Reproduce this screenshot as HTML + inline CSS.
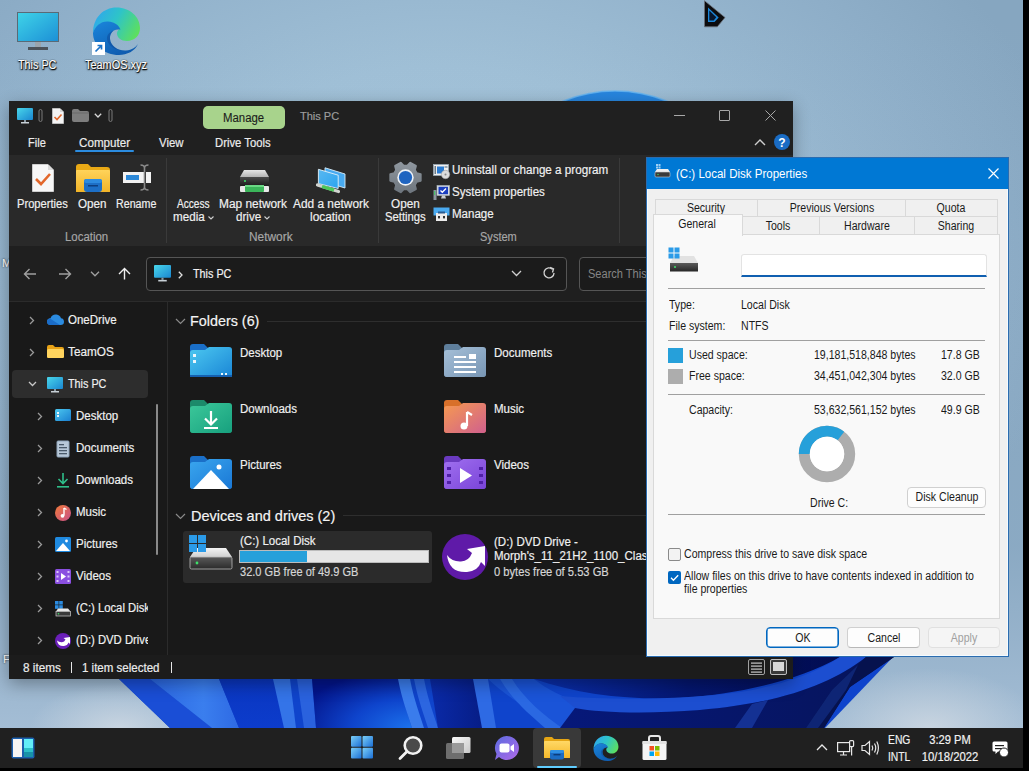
<!DOCTYPE html>
<html><head><meta charset="utf-8">
<style>
*{box-sizing:border-box;margin:0;padding:0}
html,body{width:1029px;height:771px;overflow:hidden}
body{position:relative;font-family:"Liberation Sans",sans-serif;font-size:12px;background:#000}
.a{position:absolute}
.t{position:absolute;white-space:nowrap;line-height:1}
#wall{left:0;top:0;width:1023px;height:728px;background:radial-gradient(ellipse 640px 460px at 440px 250px,#a7c6dc 0%,#9fbfd6 40%,#8eaec8 80%,#86a6c0 100%);overflow:hidden}
#exp{left:9px;top:101px;width:784px;height:578px;background:#1c1c1c;box-shadow:0 5px 16px rgba(0,0,0,.32)}
#dlg{left:646px;top:157px;width:363px;height:500px;background:#f0f0f0;border:1px solid #2b7bd0}
#task{left:0;top:728px;width:1023px;height:40px;background:#202020}
.w{color:#fff}
.g{color:#e8e8e8}
svg{position:absolute;overflow:visible}
.t{-webkit-text-stroke:0.18px currentColor}
.t.nd{-webkit-text-stroke:0}
</style></head><body>
<div id="wall" class="a">
<!-- BLOOM -->
<svg class="a" style="left:0;top:0" width="1023" height="728" viewBox="0 0 1023 728">
  <defs>
    <radialGradient id="dome" cx="0.5" cy="1" r="0.9">
      <stop offset="0" stop-color="#1a6cd8"/><stop offset="1" stop-color="#3d9cea"/>
    </radialGradient>
    <radialGradient id="lglow"><stop offset="0" stop-color="#d4dce4" stop-opacity="0.75"/><stop offset="1" stop-color="#d4dce4" stop-opacity="0"/></radialGradient>
    <linearGradient id="wallv" x1="0" y1="0" x2="0" y2="1"><stop offset="0" stop-color="#b4c8de" stop-opacity="0"/><stop offset="0.75" stop-color="#b4c8de" stop-opacity="0.1"/><stop offset="1" stop-color="#bcd0e6" stop-opacity="0.55"/></linearGradient>
    <linearGradient id="b2" x1="0" y1="0" x2="1" y2="0"><stop offset="0" stop-color="#2a66e2"/><stop offset="0.6" stop-color="#3a7eee"/><stop offset="1" stop-color="#2e6ae4"/></linearGradient>
    <linearGradient id="b3" x1="0" y1="0" x2="0" y2="1"><stop offset="0" stop-color="#0a36c0"/><stop offset="1" stop-color="#0c3ccc"/></linearGradient>
    <radialGradient id="deep" cx="1" cy="1" r="1.2"><stop offset="0" stop-color="#1c72ec"/><stop offset="0.5" stop-color="#0e44cc"/><stop offset="1" stop-color="#03148a"/></radialGradient>
    <linearGradient id="navy" x1="0" y1="0" x2="1" y2="0"><stop offset="0" stop-color="#0a2aa8"/><stop offset="1" stop-color="#061c84"/></linearGradient>
    <linearGradient id="topnavy" x1="0" y1="0" x2="1" y2="0"><stop offset="0" stop-color="#0a2fae"/><stop offset="0.5" stop-color="#041670"/><stop offset="1" stop-color="#020c50"/></linearGradient>
    <linearGradient id="botnavy" x1="0" y1="0" x2="1" y2="0"><stop offset="0" stop-color="#06187a"/><stop offset="1" stop-color="#06145a"/></linearGradient>
  </defs>
  <circle cx="615" cy="229" r="138" fill="#2584de" stroke="#62b4f2" stroke-width="1.5" stroke-opacity="0.8"/>
  <rect x="0" y="0" width="1023" height="728" fill="url(#wallv)"/>
  <ellipse cx="120" cy="728" rx="90" ry="45" fill="url(#lglow)"/>
  <ellipse cx="930" cy="728" rx="110" ry="60" fill="url(#lglow)"/>
  <!-- base bloom -->
  <path d="M119 679 L170 728 L825 728 L893 657 L893 640 L119 640 Z" fill="#0f44cc"/>
  <path d="M119 679 L150 679 L212 728 L170 728 Z" fill="#1a4ed6"/>
  <path d="M150 679 L219 679 L239 728 L212 728 Z" fill="url(#b2)"/>
  <path d="M219 679 L273 679 L290 728 L239 728 Z" fill="url(#b3)"/>
  <path d="M273 679 L290 679 L296 728 L284 728 Z" fill="#3474e8"/>
  <path d="M297 679 L312 679 L316 728 L304 728 Z" fill="#2a62de"/>
  <path d="M312 679 L400 679 C402 700 408 715 412 728 L316 728 Z" fill="url(#deep)"/>
  <path d="M398 679 L410 679 C414 700 420 715 424 728 L412 728 C408 715 402 700 398 679 Z" fill="#3a7cec"/>
  <path d="M414 679 L424 679 C428 700 434 715 438 728 L428 728 C424 715 418 700 414 679 Z" fill="#2c66e0"/>
  <path d="M430 679 L475 679 L486 728 L438 728 Z" fill="url(#navy)"/>
  <path d="M473 679 L488 679 L496 728 L482 728 Z" fill="#2e6ae4"/>
  <path d="M488 679 L534 679 C560 700 600 712 660 712 L700 710 L700 728 L560 728 C530 712 505 695 488 679 Z" fill="#1a54d8"/>
  <path d="M500 679 L512 679 C525 700 545 716 562 728 L545 728 C530 715 512 700 500 679 Z" fill="#2a68e2"/>
  <path d="M534 679 L793 679 L793 657 L840 657 C800 680 740 694 680 698 C630 700 580 695 534 679 Z" fill="url(#topnavy)"/>
  <path d="M560 696 C620 701 690 699 740 692 C790 684 820 670 840 657 L866 657 C830 685 780 703 700 710 C650 714 600 713 575 708 Z" fill="#1c4ed0"/>
  <path d="M560 728 L575 708 C600 713 650 714 700 710 C780 703 830 685 866 657 L894 657 L850 687 L824 728 Z" fill="url(#botnavy)"/>
  <path d="M735 728 L752 704 L768 700 L752 728 Z" fill="#1e44b0" opacity="0.6"/>
  <path d="M866 657 L894 657 L850 687 L824 728 L806 728 L832 690 Z" fill="#06124e"/>
  <path d="M832 690 L858 665 L846 690 L818 728 L806 728 Z" fill="#102a80" opacity="0.8"/>
</svg>
</div>

<!-- desktop icons -->
<svg style="left:17px;top:12px" width="42" height="38" viewBox="0 0 42 38">
  <defs><linearGradient id="mon" x1="0" y1="0" x2="1" y2="1"><stop offset="0" stop-color="#3fd4e8"/><stop offset="1" stop-color="#1c8fd6"/></linearGradient></defs>
  <rect x="0.5" y="0.5" width="41" height="29" fill="url(#mon)" stroke="#5a6a76" stroke-width="1"/>
  <rect x="18" y="30" width="6" height="5" fill="#9aa4ac"/>
  <rect x="11" y="35" width="20" height="3" fill="#4b5259"/>
</svg>
<div class="t" style="left:18px;top:59px;font-size:12px;transform:scaleX(.9);transform-origin:0 0;color:#fff;text-shadow:0 0 1px #000,1px 1px 1px #000,0 1px 2px #000">This PC</div>
<svg style="left:92px;top:6px" width="49" height="49" viewBox="0 0 49 49"><defs>
<linearGradient id="eaD" x1="0" y1="0.3" x2="1" y2="0.7"><stop offset="0" stop-color="#2fa8ec"/><stop offset="0.45" stop-color="#2ec4c8"/><stop offset="1" stop-color="#5fe05a"/></linearGradient>
<linearGradient id="ebD" x1="0" y1="0" x2="0.6" y2="1"><stop offset="0" stop-color="#1a86dc"/><stop offset="1" stop-color="#0f5cb0"/></linearGradient>
</defs>
<path d="M1 27 C1 12 11 1.5 24.5 1.5 C38 1.5 48 11 48 22 C48 30 42 35 35 35 C29 35 25 31.5 25 27.5 C25 25.5 26 24 27.5 23 C25 18 20 15.5 15 16 C8 16.5 3 21 1 27 Z" fill="url(#eaD)"/>
<path d="M1 27 C3 20 9 15 16 15.5 C22 16 27 19 28.5 23.5 C22 22.5 17.5 27 18 33 C18.5 40 26 45 34 44.5 C40 44 44 41 46 38 C43 45 35 49 27 49 C12 49 1 39 1 27 Z" fill="url(#ebD)"/>
<path d="M18 33 C17.5 27 22 22.5 28.5 23.5 C21 23 14.5 27 15 33 C15.5 40 24 45 34 44.5 C26 45 18.5 40 18 33 Z" fill="#0c4a9a" opacity="0.55"/><rect x="0" y="36" width="13" height="13" fill="#fff"/><path d="M3.5 45.5 L9.5 39.5 M5.5 39.5 H9.5 V43.5" stroke="#1a72c8" stroke-width="1.7" fill="none"/></svg>
<div class="t" style="left:85px;top:59px;font-size:12px;transform:scaleX(.91);transform-origin:0 0;color:#fff;text-shadow:0 0 1px #000,1px 1px 1px #000,0 1px 2px #000">TeamOS.xyz</div>
<div class="t" style="left:2px;top:258px;font-size:11px;color:#fff;text-shadow:0 0 2px #000">M</div>
<div class="t" style="left:3px;top:654px;font-size:11px;color:#fff;text-shadow:0 0 2px #000">F</div>
<!-- cursor-like glyph -->
<svg style="left:703px;top:0px" width="24" height="28" viewBox="0 0 24 28">
  <path d="M1.5 0.7 L22 17.5 L14.3 26.8 L1.5 26.8 Z" fill="#0c0c0e" stroke="#6a7078" stroke-width="0.8"/>
  <path d="M5 7.5 L15.7 17.5 L11.5 22 L5 22 Z" fill="#1c86d8"/>
  <path d="M6.3 10.5 L13.3 17.3 L10.7 20.6 L6.3 20.6 Z" fill="#06162e"/>
</svg>

<!-- EXPLORER -->
<div id="exp" class="a"></div>
<div class="a" style="left:9px;top:101px;width:784px;height:54px;background:#202020;"></div>
<div class="a" style="left:9px;top:155px;width:784px;height:91px;background:#292929;"></div>
<div class="a" style="left:9px;top:246px;width:784px;height:55px;background:#1f1f1f;"></div>
<div class="a" style="left:9px;top:301px;width:784px;height:1px;background:#2b2b2b;"></div>
<div class="a" style="left:9px;top:302px;width:784px;height:353px;background:#191919;"></div>
<div class="a" style="left:9px;top:655px;width:784px;height:24px;background:#1c1c1c;"></div>
<div class="a" style="left:167px;top:302px;width:1px;height:353px;background:#2b2b2b;"></div>
<svg style="left:17px;top:108px;" width="16" height="16" viewBox="0 0 16 16"><defs><linearGradient id="monS" x1="0" y1="0" x2="1" y2="1"><stop offset="0" stop-color="#49d6ea"/><stop offset="1" stop-color="#1a86d0"/></linearGradient></defs><rect x="0" y="0" width="16" height="12" rx="1" fill="url(#monS)"/><rect x="7" y="12" width="2" height="2" fill="#8a9aa6"/><rect x="4" y="14" width="8" height="1.5" fill="#c8d0d6"/></svg>
<svg style="left:38px;top:109px;" width="5" height="13" viewBox="0 0 5 13"><rect x="1" y="0.5" width="3" height="12" rx="1.5" fill="none" stroke="#7a7a7a" stroke-width="1"/></svg>
<svg style="left:52px;top:108px;" width="12" height="16" viewBox="0 0 12 16"><path d="M0.5 0.5 H8 L11.5 4 V15.5 H0.5 Z" fill="#f4f4f4" stroke="#bdbdbd" stroke-width="1"/><path d="M8 0.5 V4 H11.5" fill="#d6d6d6"/><path d="M2.5 9 L5 11.5 L9.5 6.5" stroke="#e2672b" stroke-width="1.6" fill="none"/></svg>
<svg style="left:72px;top:109px;" width="17" height="13" viewBox="0 0 17 13"><path d="M0 2 Q0 0 2 0 H6 L8 2 H15 Q17 2 17 4 V11 Q17 13 15 13 H2 Q0 13 0 11 Z" fill="#7e7e7e"/><path d="M0 4 H17" stroke="#6a6a6a" stroke-width="1"/></svg>
<svg style="left:94px;top:113px;" width="8" height="5" viewBox="0 0 8 5"><path d="M0.8 0.8 L4 4 L7.2 0.8" stroke="#d8d8d8" stroke-width="1.3" fill="none"/></svg>
<svg style="left:108px;top:109px;" width="5" height="13" viewBox="0 0 5 13"><rect x="1" y="0.5" width="3" height="12" rx="1.5" fill="none" stroke="#7a7a7a" stroke-width="1"/></svg>
<div class="a" style="left:203px;top:106px;width:82px;height:23px;background:#a8d38c;border-radius:5px;"></div>
<div class="t" style="left:223px;top:112.44px;font-size:12px;color:#1b1b1b;transform:scaleX(0.95);transform-origin:0 0;-webkit-text-stroke:0.1px #1b1b1b;">Manage</div>
<div class="t" style="left:300px;top:110.99px;font-size:11px;color:#9d9d9d;">This PC</div>
<div class="a" style="left:674px;top:115px;width:11px;height:1px;background:#a8a8a8;"></div>
<div class="a" style="left:719px;top:110px;width:11px;height:11px;background:transparent;border:1px solid #a8a8a8;border-radius:1px;"></div>
<svg style="left:765px;top:110px;" width="11" height="11" viewBox="0 0 11 11"><path d="M0.5 0.5 L10.5 10.5 M10.5 0.5 L0.5 10.5" stroke="#a8a8a8" stroke-width="1"/></svg>
<div class="t" style="left:28px;top:136.84px;font-size:12px;color:#ececec;transform:scaleX(0.92);transform-origin:0 0;">File</div>
<div class="t" style="left:79px;top:136.84px;font-size:12px;color:#ececec;transform:scaleX(0.97);transform-origin:0 0;">Computer</div>
<div class="t" style="left:159px;top:136.84px;font-size:12px;color:#ececec;transform:scaleX(0.95);transform-origin:0 0;">View</div>
<div class="t" style="left:215px;top:136.84px;font-size:12px;color:#ececec;transform:scaleX(0.94);transform-origin:0 0;">Drive Tools</div>
<div class="a" style="left:75px;top:150px;width:59px;height:2px;background:#2b8ce0;border-radius:1px;"></div>
<svg style="left:754px;top:138px;" width="12" height="8" viewBox="0 0 12 8"><path d="M1 7 L6 2 L11 7" stroke="#cfcfcf" stroke-width="1.4" fill="none"/></svg>
<svg style="left:774px;top:134px;" width="16" height="16" viewBox="0 0 16 16"><circle cx="8" cy="8" r="8" fill="#1a6cc4"/><text x="8" y="12.5" text-anchor="middle" font-family="Liberation Sans" font-weight="bold" font-size="12" fill="#fff">?</text></svg>
<div class="a" style="left:166px;top:158px;width:1px;height:85px;background:#3a3a3a;"></div>
<div class="a" style="left:378px;top:158px;width:1px;height:85px;background:#3a3a3a;"></div>
<div class="a" style="left:619px;top:158px;width:1px;height:85px;background:#3a3a3a;"></div>
<svg style="left:32px;top:164px;" width="22" height="28" viewBox="0 0 22 28"><path d="M0.5 0.5 H16 L21.5 6 V27.5 H0.5 Z" fill="#f7f7f7" stroke="#cfcfcf"/><path d="M16 0.5 V6 H21.5 Z" fill="#dadada"/><path d="M4 15 L9 20 L18 10" stroke="#e2672b" stroke-width="2.6" fill="none"/></svg>
<svg style="left:76px;top:164px;" width="34" height="28" viewBox="0 0 34 28"><defs><linearGradient id="opf" x1="0" y1="0" x2="0" y2="1"><stop offset="0" stop-color="#ffd35a"/><stop offset="1" stop-color="#f2b428"/></linearGradient></defs><path d="M0 3 Q0 0 3 0 H12 L15 3 H31 Q34 3 34 6 V28 H0 Z" fill="#e9a915"/><rect x="0" y="6" width="34" height="22" rx="1" fill="url(#opf)"/><rect x="8" y="15" width="18" height="13" rx="3" fill="#1d6fc6"/><rect x="8" y="15" width="18" height="4" rx="2" fill="#2d8be0"/><rect x="12" y="21" width="10" height="1.5" fill="#0d3f80"/></svg>
<svg style="left:122px;top:164px;" width="30" height="27" viewBox="0 0 30 27"><rect x="1" y="8" width="22" height="11" fill="#f2f2f2"/><rect x="4" y="11" width="13" height="5" fill="#2b88d8"/><rect x="24" y="8" width="5" height="11" fill="#f2f2f2"/><path d="M18.5 1 Q22.5 1 22.5 4 V23 Q22.5 26 18.5 26 M26.5 1 Q22.5 1 22.5 4 V23 Q22.5 26 26.5 26" stroke="#8a8a8a" stroke-width="1.6" fill="none"/></svg>
<div class="t" style="left:17px;top:198.14px;font-size:12px;color:#f0f0f0;transform:scaleX(0.93);transform-origin:0 0;">Properties</div>
<div class="t" style="left:78px;top:198.14px;font-size:12px;color:#f0f0f0;transform:scaleX(0.97);transform-origin:0 0;">Open</div>
<div class="t" style="left:116px;top:198.14px;font-size:12px;color:#f0f0f0;transform:scaleX(0.89);transform-origin:0 0;">Rename</div>
<div class="t" style="left:65px;top:231.14px;font-size:12px;color:#a6a6a6;transform:scaleX(0.95);transform-origin:0 0;">Location</div>
<div class="t" style="left:177px;top:198.34px;font-size:12px;color:#f0f0f0;transform:scaleX(0.84);transform-origin:0 0;">Access</div>
<div class="t" style="left:173px;top:211.34px;font-size:12px;color:#f0f0f0;transform:scaleX(0.97);transform-origin:0 0;">media</div>
<svg style="left:208px;top:216px;" width="6" height="4" viewBox="0 0 6 4"><path d="M0.5 0.5 L3 3 L5.5 0.5" stroke="#d0d0d0" stroke-width="1.1" fill="none"/></svg>
<svg style="left:240px;top:170px;" width="29" height="22" viewBox="0 0 29 22"><defs><linearGradient id="drv" x1="0" y1="0" x2="0" y2="1"><stop offset="0" stop-color="#e6e6e6"/><stop offset="1" stop-color="#b4b4b4"/></linearGradient><linearGradient id="drb" x1="0" y1="0" x2="0" y2="1"><stop offset="0" stop-color="#4a4a4a"/><stop offset="1" stop-color="#1c1c1c"/></linearGradient></defs><path d="M4 0 H25 L29 7 H0 Z" fill="url(#drv)"/><rect x="0" y="7" width="29" height="9" fill="url(#drb)"/><circle cx="5" cy="11" r="1" fill="#3ee06a"/><rect x="0" y="16" width="29" height="6" rx="1" fill="#e8e8e8"/><rect x="5" y="15" width="19" height="7" rx="1" fill="#3bb55a"/><rect x="5" y="15" width="19" height="2" fill="#6ad884"/></svg>
<div class="t" style="left:219px;top:198.34px;font-size:12px;color:#f0f0f0;transform:scaleX(0.99);transform-origin:0 0;">Map network</div>
<div class="t" style="left:236px;top:211.34px;font-size:12px;color:#f0f0f0;transform:scaleX(0.97);transform-origin:0 0;">drive</div>
<svg style="left:264px;top:216px;" width="6" height="4" viewBox="0 0 6 4"><path d="M0.5 0.5 L3 3 L5.5 0.5" stroke="#d0d0d0" stroke-width="1.1" fill="none"/></svg>
<svg style="left:316px;top:167px;" width="31" height="27" viewBox="0 0 31 27"><defs><linearGradient id="nls" x1="0" y1="0" x2="1" y2="1"><stop offset="0" stop-color="#5ab8f0"/><stop offset="1" stop-color="#2aa4f0"/></linearGradient></defs><path d="M9 0.8 L29 7 V21 L9 15 Z" fill="#48aaf0" stroke="#d8ecf8" stroke-width="0.9"/><path d="M2.4 2.3 L22.2 8.2 V21.5 L2.4 16.6 Z" fill="url(#nls)" stroke="#e2f2fb" stroke-width="0.9"/><path d="M1.5 18 L22.5 24.5" stroke="#d0d4d0" stroke-width="3.2" stroke-linecap="round"/><path d="M6 19.5 L18 23.2" stroke="#4cc85a" stroke-width="3.4"/></svg>
<div class="t" style="left:293px;top:198.34px;font-size:12px;color:#f0f0f0;transform:scaleX(0.99);transform-origin:0 0;">Add a network</div>
<div class="t" style="left:310px;top:211.34px;font-size:12px;color:#f0f0f0;transform:scaleX(0.99);transform-origin:0 0;">location</div>
<div class="t" style="left:249px;top:231.14px;font-size:12px;color:#a6a6a6;transform:scaleX(0.99);transform-origin:0 0;">Network</div>
<svg style="left:389px;top:162px;" width="34" height="32" viewBox="0 0 34 32"><defs><linearGradient id="gr" x1="0" y1="0" x2="0" y2="1"><stop offset="0" stop-color="#8e969e"/><stop offset="1" stop-color="#6e767e"/></linearGradient></defs><path d="M18.38 3.65 L21.29 0.76 L26.87 3.98 L25.83 7.95 L27.70 11.20 L31.66 12.28 L31.66 18.72 L27.70 19.80 L25.83 23.05 L26.87 27.02 L21.29 30.24 L18.38 27.35 L14.62 27.35 L11.71 30.24 L6.13 27.02 L7.17 23.05 L5.30 19.80 L1.34 18.72 L1.34 12.28 L5.30 11.20 L7.17 7.95 L6.13 3.98 L11.71 0.76 L14.62 3.65 Z" fill="url(#gr)" stroke="url(#gr)" stroke-width="2" stroke-linejoin="round"/><circle cx="16.5" cy="15.5" r="8.2" fill="#eef2f6"/><circle cx="16.5" cy="15.5" r="6.6" fill="#1e64c0"/></svg>
<div class="t" style="left:391px;top:198.34px;font-size:12px;color:#f0f0f0;transform:scaleX(0.98);transform-origin:0 0;">Open</div>
<div class="t" style="left:385px;top:211.34px;font-size:12px;color:#f0f0f0;transform:scaleX(0.94);transform-origin:0 0;">Settings</div>
<svg style="left:433px;top:164px;" width="17" height="15" viewBox="0 0 17 15"><rect x="0.5" y="0.5" width="15" height="11" fill="#f0f0f0" stroke="#9aa8b4" stroke-width="0.8"/><rect x="1.5" y="2" width="1.5" height="8" fill="#6a7a88"/><rect x="4" y="2.5" width="7" height="7" fill="#2b7bd0"/><rect x="11.5" y="2" width="3" height="2" fill="#9aa8b4"/><circle cx="12.5" cy="10.5" r="4.2" fill="#dcdcdc" stroke="#a0a0a0" stroke-width="0.6"/><circle cx="12.5" cy="10.5" r="1" fill="#888"/></svg>
<div class="t" style="left:452px;top:164.34px;font-size:12px;color:#f0f0f0;transform:scaleX(0.972);transform-origin:0 0;">Uninstall or change a program</div>
<svg style="left:433px;top:185px;" width="17" height="16" viewBox="0 0 17 16"><rect x="0.5" y="5" width="3" height="10" fill="#8a949c"/><rect x="1" y="6" width="1.2" height="4" fill="#4bc16a"/><rect x="4" y="0.5" width="12.5" height="10" fill="#d8dde2" stroke="#aab4bc" stroke-width="0.6"/><rect x="5.5" y="1.8" width="9.5" height="7.4" fill="#1a3ec0"/><path d="M7.5 5.5 L9.3 7.3 L13 3.5" stroke="#fff" stroke-width="1.3" fill="none"/><path d="M9 10.5 L8 13.5 H13 L12 10.5 Z" fill="#c8cdd2"/></svg>
<div class="t" style="left:452px;top:186.04px;font-size:12px;color:#f0f0f0;transform:scaleX(0.96);transform-origin:0 0;">System properties</div>
<svg style="left:433px;top:207px;" width="17" height="15" viewBox="0 0 17 15"><rect x="0.5" y="0.5" width="16" height="8" fill="#4aaaf0"/><path d="M3 6 H14 V14 H3 Z" fill="#ececec"/><rect x="5" y="4.5" width="7" height="2" fill="#2a5a90"/><rect x="5" y="9" width="2" height="2.4" fill="#333"/><rect x="10" y="9" width="2" height="2.4" fill="#333"/></svg>
<div class="t" style="left:452px;top:208.04px;font-size:12px;color:#f0f0f0;transform:scaleX(0.96);transform-origin:0 0;">Manage</div>
<div class="t" style="left:480px;top:231.14px;font-size:12px;color:#a6a6a6;transform:scaleX(0.92);transform-origin:0 0;">System</div>
<svg style="left:23px;top:268px;" width="14" height="12" viewBox="0 0 14 12"><path d="M13 6 H1.5 M6.5 1 L1.5 6 L6.5 11" stroke="#a0a0a0" stroke-width="1.4" fill="none"/></svg>
<svg style="left:58px;top:268px;" width="14" height="12" viewBox="0 0 14 12"><path d="M1 6 H12.5 M7.5 1 L12.5 6 L7.5 11" stroke="#a0a0a0" stroke-width="1.4" fill="none"/></svg>
<svg style="left:90px;top:271px;" width="10" height="6" viewBox="0 0 10 6"><path d="M1 0.8 L5 4.8 L9 0.8" stroke="#a0a0a0" stroke-width="1.3" fill="none"/></svg>
<svg style="left:118px;top:267px;" width="13" height="13" viewBox="0 0 13 13"><path d="M6.5 12.5 V1.5 M1 7 L6.5 1.5 L12 7" stroke="#f0f0f0" stroke-width="1.4" fill="none"/></svg>
<div class="a" style="left:146px;top:257px;width:421px;height:34px;background:#1b1b1b;border:1px solid #555;border-radius:4px;"></div>
<svg style="left:154px;top:265px;" width="17" height="17" viewBox="0 0 16 16"><defs><linearGradient id="monS2" x1="0" y1="0" x2="1" y2="1"><stop offset="0" stop-color="#49d6ea"/><stop offset="1" stop-color="#1a86d0"/></linearGradient></defs><rect x="0" y="0" width="16" height="12" rx="1" fill="url(#monS2)"/><rect x="7" y="12" width="2" height="2" fill="#8a9aa6"/><rect x="4" y="14" width="8" height="1.5" fill="#c8d0d6"/></svg>
<svg style="left:178px;top:271px;" width="5" height="8" viewBox="0 0 5 8"><path d="M0.8 0.8 L4 4 L0.8 7.2" stroke="#e0e0e0" stroke-width="1.3" fill="none"/></svg>
<div class="t" style="left:193px;top:267.94px;font-size:12px;color:#f2f2f2;transform:scaleX(0.9);transform-origin:0 0;">This PC</div>
<svg style="left:511px;top:270px;" width="11" height="7" viewBox="0 0 11 7"><path d="M1 1 L5.5 5.5 L10 1" stroke="#d0d0d0" stroke-width="1.3" fill="none"/></svg>
<svg style="left:542px;top:266px;" width="14" height="14" viewBox="0 0 14 14"><path d="M12 7 A5 5 0 1 1 10.5 3.3" stroke="#d0d0d0" stroke-width="1.4" fill="none"/><path d="M8 1.5 L11.5 3 L10.5 6.5" stroke="#d0d0d0" stroke-width="1.4" fill="none"/></svg>
<div class="a" style="left:579px;top:257px;width:120px;height:34px;background:#1b1b1b;border:1px solid #555;border-radius:4px;"></div>
<div class="t" style="left:588px;top:267.94px;font-size:12px;color:#858585;transform:scaleX(0.92);transform-origin:0 0;-webkit-text-stroke:0;">Search This PC</div>
<div class="a" style="left:9px;top:302px;width:139px;height:353px;overflow:hidden">
<div class="a" style="left:2.5px;top:68px;width:136px;height:28px;background:#2d2d2d;border-radius:4px;"></div>
<svg style="left:20px;top:14px;" width="6" height="9" viewBox="0 0 6 9"><path d="M1 1 L4.5 4.5 L1 8" stroke="#9a9a9a" stroke-width="1.3" fill="none"/></svg>
<svg style="left:38px;top:12px;" width="17" height="11" viewBox="0 0 17 11"><path d="M4 11 Q0 11 0 7.5 Q0 4.5 3.5 4.2 Q5 0 9.5 0.5 Q13 1 14 4.2 Q17 4.5 17 7.8 Q17 11 13.5 11 Z" fill="#2b8be0"/><path d="M4 11 Q0 11 0 7.5 Q0 5 3 4.5 L13 11 Z" fill="#1a6cc8"/></svg>
<div class="t" style="left:59px;top:11.84px;font-size:12px;color:#f0f0f0;transform:scaleX(0.96);transform-origin:0 0;">OneDrive</div>
<svg style="left:20px;top:46px;" width="6" height="9" viewBox="0 0 6 9"><path d="M1 1 L4.5 4.5 L1 8" stroke="#9a9a9a" stroke-width="1.3" fill="none"/></svg>
<svg style="left:38px;top:43px;" width="17" height="13" viewBox="0 0 17 13"><path d="M0 2 Q0 0 2 0 H6 L8 2 H15 Q17 2 17 4 V11 Q17 13 15 13 H2 Q0 13 0 11 Z" fill="#e8a317"/><rect x="0" y="4" width="17" height="9" rx="1.5" fill="#ffd45e"/></svg>
<div class="t" style="left:59px;top:43.84px;font-size:12px;color:#f0f0f0;transform:scaleX(0.98);transform-origin:0 0;">TeamOS</div>
<svg style="left:19px;top:79px;" width="9" height="6" viewBox="0 0 9 6"><path d="M1 1 L4.5 4.5 L8 1" stroke="#c8c8c8" stroke-width="1.3" fill="none"/></svg>
<svg style="left:38px;top:75px;" width="16" height="16" viewBox="0 0 16 16"><defs><linearGradient id="monS3" x1="0" y1="0" x2="1" y2="1"><stop offset="0" stop-color="#49d6ea"/><stop offset="1" stop-color="#1a86d0"/></linearGradient></defs><rect x="0" y="0" width="16" height="12" rx="1" fill="url(#monS3)"/><rect x="7" y="12" width="2" height="2" fill="#8a9aa6"/><rect x="4" y="14" width="8" height="1.5" fill="#c8d0d6"/></svg>
<div class="t" style="left:59px;top:75.84px;font-size:12px;color:#f0f0f0;transform:scaleX(0.9);transform-origin:0 0;">This PC</div>
<svg style="left:28px;top:110px;" width="6" height="9" viewBox="0 0 6 9"><path d="M1 1 L4.5 4.5 L1 8" stroke="#9a9a9a" stroke-width="1.3" fill="none"/></svg>
<svg style="left:46px;top:107px;" width="17" height="16" viewBox="0 0 17 16"><defs><linearGradient id="dsk" x1="0" y1="0" x2="1" y2="1"><stop offset="0" stop-color="#4cc8f0"/><stop offset="1" stop-color="#1a7fd0"/></linearGradient></defs><rect x="0" y="0" width="16" height="12" rx="1.5" fill="url(#dsk)"/><rect x="2" y="3" width="2" height="2" fill="#e8f6fc"/><rect x="2" y="6" width="2" height="2" fill="#e8f6fc"/></svg>
<div class="t" style="left:67px;top:107.84px;font-size:12px;color:#f0f0f0;transform:scaleX(0.96);transform-origin:0 0;">Desktop</div>
<svg style="left:28px;top:142px;" width="6" height="9" viewBox="0 0 6 9"><path d="M1 1 L4.5 4.5 L1 8" stroke="#9a9a9a" stroke-width="1.3" fill="none"/></svg>
<svg style="left:46px;top:139px;" width="17" height="16" viewBox="0 0 17 16"><rect x="2" y="0" width="12" height="16" rx="1" fill="#b8c8d8"/><rect x="2" y="0" width="12" height="16" rx="1" fill="none" stroke="#8ea4ba"/><rect x="4" y="3" width="5" height="1.3" fill="#4a5a6a"/><rect x="4" y="6" width="8" height="1.3" fill="#4a5a6a"/><rect x="4" y="9" width="8" height="1.3" fill="#4a5a6a"/><rect x="4" y="12" width="8" height="1.3" fill="#4a5a6a"/></svg>
<div class="t" style="left:67px;top:139.84px;font-size:12px;color:#f0f0f0;transform:scaleX(0.96);transform-origin:0 0;">Documents</div>
<svg style="left:28px;top:174px;" width="6" height="9" viewBox="0 0 6 9"><path d="M1 1 L4.5 4.5 L1 8" stroke="#9a9a9a" stroke-width="1.3" fill="none"/></svg>
<svg style="left:46px;top:171px;" width="17" height="16" viewBox="0 0 17 16"><path d="M8 0 V10 M3.5 6 L8 10.5 L12.5 6" stroke="#2fbf8a" stroke-width="1.6" fill="none"/><rect x="2" y="13" width="12" height="1.6" fill="#2fbf8a"/></svg>
<div class="t" style="left:67px;top:171.84px;font-size:12px;color:#f0f0f0;transform:scaleX(0.96);transform-origin:0 0;">Downloads</div>
<svg style="left:28px;top:206px;" width="6" height="9" viewBox="0 0 6 9"><path d="M1 1 L4.5 4.5 L1 8" stroke="#9a9a9a" stroke-width="1.3" fill="none"/></svg>
<svg style="left:46px;top:203px;" width="17" height="16" viewBox="0 0 17 16"><defs><linearGradient id="mus" x1="0" y1="0" x2="1" y2="1"><stop offset="0" stop-color="#f07a3a"/><stop offset="1" stop-color="#c8508a"/></linearGradient></defs><circle cx="8" cy="8" r="8" fill="url(#mus)"/><path d="M9 3 V10.5" stroke="#fff" stroke-width="1.4"/><circle cx="7.5" cy="10.8" r="1.9" fill="#fff"/><path d="M9 3 L11.5 4.5" stroke="#fff" stroke-width="1.4"/></svg>
<div class="t" style="left:67px;top:203.84px;font-size:12px;color:#f0f0f0;transform:scaleX(0.96);transform-origin:0 0;">Music</div>
<svg style="left:28px;top:238px;" width="6" height="9" viewBox="0 0 6 9"><path d="M1 1 L4.5 4.5 L1 8" stroke="#9a9a9a" stroke-width="1.3" fill="none"/></svg>
<svg style="left:46px;top:235px;" width="17" height="16" viewBox="0 0 17 16"><rect x="0" y="0" width="16" height="15" rx="1.5" fill="#1f8ae0"/><path d="M1 14 L8 6 L15 14 Z" fill="#fff"/><circle cx="11.5" cy="4" r="1.4" fill="#fff"/></svg>
<div class="t" style="left:67px;top:235.84px;font-size:12px;color:#f0f0f0;transform:scaleX(0.96);transform-origin:0 0;">Pictures</div>
<svg style="left:28px;top:270px;" width="6" height="9" viewBox="0 0 6 9"><path d="M1 1 L4.5 4.5 L1 8" stroke="#9a9a9a" stroke-width="1.3" fill="none"/></svg>
<svg style="left:46px;top:267px;" width="17" height="16" viewBox="0 0 17 16"><rect x="0" y="0" width="16" height="15" rx="1.5" fill="#8a4fe0"/><rect x="1.5" y="2" width="2" height="2" fill="#d8c4f8"/><rect x="1.5" y="6.5" width="2" height="2" fill="#d8c4f8"/><rect x="1.5" y="11" width="2" height="2" fill="#d8c4f8"/><rect x="12.5" y="2" width="2" height="2" fill="#d8c4f8"/><rect x="12.5" y="6.5" width="2" height="2" fill="#d8c4f8"/><rect x="12.5" y="11" width="2" height="2" fill="#d8c4f8"/><path d="M6 4 L11 7.5 L6 11 Z" fill="#fff"/></svg>
<div class="t" style="left:67px;top:267.84px;font-size:12px;color:#f0f0f0;transform:scaleX(0.96);transform-origin:0 0;">Videos</div>
<svg style="left:28px;top:302px;" width="6" height="9" viewBox="0 0 6 9"><path d="M1 1 L4.5 4.5 L1 8" stroke="#9a9a9a" stroke-width="1.3" fill="none"/></svg>
<svg style="left:46px;top:299px;" width="17" height="16" viewBox="0 0 17 16"><rect x="0" y="0" width="3.6" height="3.6" fill="#2b8be0"/><rect x="4.2" y="0" width="3.6" height="3.6" fill="#2b8be0"/><rect x="0" y="4.2" width="3.6" height="3.6" fill="#2b8be0"/><rect x="4.2" y="4.2" width="3.6" height="3.6" fill="#2b8be0"/><path d="M3 7.5 H13 L15.5 10.5 H1 Z" fill="#e8e8e8"/><rect x="1" y="10.5" width="14.5" height="4.5" fill="#3a3a3a" stroke="#cfcfcf" stroke-width="0.7"/><circle cx="3.5" cy="12.8" r="0.8" fill="#3ee06a"/></svg>
<div class="t" style="left:67px;top:299.84px;font-size:12px;color:#f0f0f0;transform:scaleX(0.94);transform-origin:0 0;">(C:) Local Disk</div>
<svg style="left:28px;top:334px;" width="6" height="9" viewBox="0 0 6 9"><path d="M1 1 L4.5 4.5 L1 8" stroke="#9a9a9a" stroke-width="1.3" fill="none"/></svg>
<svg style="left:46px;top:331px;" width="17" height="16" viewBox="0 0 17 16"><circle cx="8" cy="8" r="8" fill="#6a1fb8"/><path d="M2 7.5 Q3 13.5 9 13 Q12.5 12.5 13.5 9.5 L15 11 L15 4 L8.5 5 L10.5 6.5 Q9.5 9 7 9.2 Q4 9.4 2 7.5 Z" fill="#fff"/></svg>
<div class="t" style="left:67px;top:331.84px;font-size:12px;color:#f0f0f0;transform:scaleX(0.94);transform-origin:0 0;">(D:) DVD Drive</div>
</div>
<div class="a" style="left:156px;top:404px;width:2px;height:151px;background:#8a8a8a;border-radius:1px;"></div>
<div class="a" style="left:168px;top:302px;width:625px;height:353px;overflow:hidden">
<svg style="left:7px;top:16px;" width="11" height="7" viewBox="0 0 11 7"><path d="M1 1 L5.5 5.5 L10 1" stroke="#8a8a8a" stroke-width="1.2" fill="none"/></svg>
<div class="t" style="left:22px;top:11.72px;font-size:14.5px;color:#f4f4f4;transform:scaleX(0.99);transform-origin:0 0;">Folders (6)</div>
<div class="a" style="left:99px;top:19px;width:526px;height:1px;background:#2e2e2e;"></div>
<svg style="left:7px;top:211px;" width="11" height="7" viewBox="0 0 11 7"><path d="M1 1 L5.5 5.5 L10 1" stroke="#8a8a8a" stroke-width="1.2" fill="none"/></svg>
<div class="t" style="left:23px;top:206.72px;font-size:14.5px;color:#f4f4f4;transform:scaleX(1.0);transform-origin:0 0;">Devices and drives (2)</div>
<div class="a" style="left:175px;top:213px;width:450px;height:1px;background:#2e2e2e;"></div>
<svg style="left:22px;top:42px;" width="42" height="33" viewBox="0 0 42 33"><defs><linearGradient id="fdk" x1="0" y1="0" x2="1" y2="1"><stop offset="0" stop-color="#4cc8f0"/><stop offset="1" stop-color="#1a86d6"/></linearGradient></defs><path d="M0 3 Q0 0 3 0 H14 L18 4 H39 Q42 4 42 7 V30 Q42 33 39 33 H3 Q0 33 0 30 Z" fill="#1a6fc8"/><path d="M0 9 Q0 6 3 6 H15 L19 3 H39 Q42 3 42 6 V30 Q42 33 39 33 H3 Q0 33 0 30 Z" fill="url(#fdk)"/><rect x="3" y="10" width="3" height="3" fill="#eaf6fc"/><rect x="3" y="16" width="3" height="3" fill="#eaf6fc"/><rect x="31" y="29" width="2" height="2" fill="#eaf6fc"/><rect x="35" y="29" width="2" height="2" fill="#eaf6fc"/><rect x="0" y="31" width="42" height="2" fill="#1560b0"/></svg>
<div class="t" style="left:72px;top:45.44px;font-size:12px;color:#f0f0f0;transform:scaleX(0.96);transform-origin:0 0;">Desktop</div>
<svg style="left:22px;top:98px;" width="42" height="33" viewBox="0 0 42 33"><defs><linearGradient id="fdl" x1="0" y1="0" x2="1" y2="1"><stop offset="0" stop-color="#3cc89a"/><stop offset="1" stop-color="#17a07e"/></linearGradient></defs><path d="M0 3 Q0 0 3 0 H14 L18 4 H39 Q42 4 42 7 V30 Q42 33 39 33 H3 Q0 33 0 30 Z" fill="#1c8a6a"/><path d="M0 9 Q0 6 3 6 H15 L19 3 H39 Q42 3 42 6 V30 Q42 33 39 33 H3 Q0 33 0 30 Z" fill="url(#fdl)"/><path d="M21 11 V24 M15 18.5 L21 24.5 L27 18.5" stroke="#fff" stroke-width="2.2" fill="none"/><rect x="14" y="27" width="14" height="2" fill="#fff"/></svg>
<div class="t" style="left:72px;top:101.44px;font-size:12px;color:#f0f0f0;transform:scaleX(0.96);transform-origin:0 0;">Downloads</div>
<svg style="left:22px;top:154px;" width="42" height="33" viewBox="0 0 42 33"><defs><linearGradient id="fpc" x1="0" y1="0" x2="1" y2="1"><stop offset="0" stop-color="#3aa6ee"/><stop offset="1" stop-color="#1a78d6"/></linearGradient></defs><path d="M0 3 Q0 0 3 0 H14 L18 4 H39 Q42 4 42 7 V30 Q42 33 39 33 H3 Q0 33 0 30 Z" fill="#1a6fc8"/><path d="M0 9 Q0 6 3 6 H15 L19 3 H39 Q42 3 42 6 V30 Q42 33 39 33 H3 Q0 33 0 30 Z" fill="url(#fpc)"/><path d="M3 33 L21 14 L39 33 Z" fill="#fff"/><circle cx="29" cy="11" r="2.5" fill="#fff"/></svg>
<div class="t" style="left:72px;top:157.44px;font-size:12px;color:#f0f0f0;transform:scaleX(0.96);transform-origin:0 0;">Pictures</div>
<svg style="left:276px;top:42px;" width="42" height="33" viewBox="0 0 42 33"><defs><linearGradient id="fdc" x1="0" y1="0" x2="1" y2="1"><stop offset="0" stop-color="#a6c0d8"/><stop offset="1" stop-color="#7896b4"/></linearGradient></defs><path d="M0 3 Q0 0 3 0 H14 L18 4 H39 Q42 4 42 7 V30 Q42 33 39 33 H3 Q0 33 0 30 Z" fill="#5f7f9c"/><path d="M0 9 Q0 6 3 6 H15 L19 3 H39 Q42 3 42 6 V30 Q42 33 39 33 H3 Q0 33 0 30 Z" fill="url(#fdc)"/><rect x="10" y="12" width="12" height="2" fill="#fff"/><rect x="10" y="17" width="22" height="2" fill="#fff"/><rect x="10" y="22" width="22" height="2" fill="#fff"/><rect x="10" y="27" width="22" height="2" fill="#fff"/><rect x="25" y="10" width="7" height="5" fill="#fff"/></svg>
<div class="t" style="left:326px;top:45.44px;font-size:12px;color:#f0f0f0;transform:scaleX(0.96);transform-origin:0 0;">Documents</div>
<svg style="left:276px;top:98px;" width="42" height="33" viewBox="0 0 42 33"><defs><linearGradient id="fmu" x1="0" y1="0" x2="1" y2="1"><stop offset="0" stop-color="#f69a50"/><stop offset="1" stop-color="#d0608e"/></linearGradient></defs><path d="M0 3 Q0 0 3 0 H14 L18 4 H39 Q42 4 42 7 V30 Q42 33 39 33 H3 Q0 33 0 30 Z" fill="#d8702a"/><path d="M0 9 Q0 6 3 6 H15 L19 3 H39 Q42 3 42 6 V30 Q42 33 39 33 H3 Q0 33 0 30 Z" fill="url(#fmu)"/><path d="M23 12 V26" stroke="#fff" stroke-width="2.2"/><circle cx="20" cy="26" r="3.5" fill="#fff"/><path d="M23 12 L28 15" stroke="#fff" stroke-width="2.2"/></svg>
<div class="t" style="left:326px;top:101.44px;font-size:12px;color:#f0f0f0;transform:scaleX(0.96);transform-origin:0 0;">Music</div>
<svg style="left:276px;top:154px;" width="42" height="33" viewBox="0 0 42 33"><defs><linearGradient id="fvd" x1="0" y1="0" x2="1" y2="1"><stop offset="0" stop-color="#a070f0"/><stop offset="1" stop-color="#7a44d8"/></linearGradient></defs><path d="M0 3 Q0 0 3 0 H14 L18 4 H39 Q42 4 42 7 V30 Q42 33 39 33 H3 Q0 33 0 30 Z" fill="#6a3ac0"/><path d="M0 9 Q0 6 3 6 H15 L19 3 H39 Q42 3 42 6 V30 Q42 33 39 33 H3 Q0 33 0 30 Z" fill="url(#fvd)"/><rect x="3" y="11" width="4" height="3" fill="#5020a8"/><rect x="3" y="18" width="4" height="3" fill="#5020a8"/><rect x="3" y="25" width="4" height="3" fill="#5020a8"/><rect x="35" y="11" width="4" height="3" fill="#5020a8"/><rect x="35" y="18" width="4" height="3" fill="#5020a8"/><rect x="35" y="25" width="4" height="3" fill="#5020a8"/><path d="M16 12 L28 19.5 L16 27 Z" fill="#fff"/></svg>
<div class="t" style="left:326px;top:157.44px;font-size:12px;color:#f0f0f0;transform:scaleX(0.96);transform-origin:0 0;">Videos</div>
<div class="a" style="left:15px;top:229px;width:249px;height:52px;background:#2b2b2b;border-radius:3px;"></div>
<svg style="left:20px;top:233px;" width="45" height="35" viewBox="0 0 45 35"><defs><linearGradient id="dtop" x1="0" y1="0" x2="0" y2="1"><stop offset="0" stop-color="#f4f4f4"/><stop offset="1" stop-color="#d0d0d0"/></linearGradient><linearGradient id="dbod" x1="0" y1="0" x2="0" y2="1"><stop offset="0" stop-color="#5a5a5a"/><stop offset="1" stop-color="#2a2a2a"/></linearGradient></defs><path d="M8 13 H38 L44 22 H2 Z" fill="url(#dtop)"/><rect x="2" y="22" width="42" height="12" rx="1.5" fill="url(#dbod)" stroke="#bdbdbd" stroke-width="0.8"/><circle cx="9" cy="28" r="1.4" fill="#3ee06a"/><rect x="1" y="0" width="8" height="8" fill="#2b9be8"/><rect x="10" y="0" width="8" height="8" fill="#2b9be8"/><rect x="1" y="9" width="8" height="8" fill="#2b9be8"/><rect x="10" y="9" width="8" height="8" fill="#2b9be8"/></svg>
<div class="t" style="left:72px;top:233.14px;font-size:12px;color:#f0f0f0;transform:scaleX(0.96);transform-origin:0 0;">(C:) Local Disk</div>
<div class="a" style="left:71px;top:248px;width:190px;height:13px;background:#e6e6e6;border:1px solid #bcbcbc;"></div>
<div class="a" style="left:72px;top:249px;width:67px;height:11px;background:#26a0da;"></div>
<div class="t" style="left:72px;top:263.84px;font-size:12px;color:#d6d6d6;transform:scaleX(0.92);transform-origin:0 0;">32.0 GB free of 49.9 GB</div>
<svg style="left:274px;top:232px;" width="46" height="46" viewBox="0 0 46 46"><circle cx="23" cy="23" r="23" fill="#5f1aa8"/><path d="M5 21 Q7 39 25 38 Q36 37 39 28 L43 32 L43 12 L25 15 L30 19 Q27 27 19 27.5 Q10 28 5 21 Z" fill="#fff"/></svg>
<div class="t" style="left:326px;top:233.84px;font-size:12px;color:#f0f0f0;transform:scaleX(0.96);transform-origin:0 0;">(D:) DVD Drive -</div>
<div class="t" style="left:326px;top:247.84px;font-size:12px;color:#f0f0f0;transform:scaleX(0.96);transform-origin:0 0;">Morph's_11_21H2_1100_Class</div>
<div class="t" style="left:326px;top:263.84px;font-size:12px;color:#d6d6d6;transform:scaleX(0.93);transform-origin:0 0;">0 bytes free of 5.53 GB</div>
</div>
<div class="t" style="left:23px;top:662.34px;font-size:12px;color:#ececec;transform:scaleX(0.98);transform-origin:0 0;">8 items</div>
<div class="a" style="left:71px;top:662px;width:1.3px;height:11px;background:#e6e6e6;"></div>
<div class="t" style="left:82px;top:662.34px;font-size:12px;color:#ececec;transform:scaleX(0.96);transform-origin:0 0;">1 item selected</div>
<div class="a" style="left:171px;top:662px;width:1.3px;height:11px;background:#e6e6e6;"></div>
<svg style="left:748px;top:659px;" width="17" height="16" viewBox="0 0 17 16"><rect x="0.5" y="0.5" width="16" height="15" rx="1.5" fill="none" stroke="#a0a0a0"/><rect x="3" y="3.5" width="11" height="1.2" fill="#c8c8c8"/><rect x="3" y="6.5" width="11" height="1.2" fill="#c8c8c8"/><rect x="3" y="9.5" width="11" height="1.2" fill="#c8c8c8"/><rect x="3" y="12.5" width="11" height="1.2" fill="#c8c8c8"/></svg>
<svg style="left:770px;top:659px;" width="17" height="16" viewBox="0 0 17 16"><rect x="0" y="0" width="17" height="16" rx="2" fill="#3a3a3a"/><rect x="0.5" y="0.5" width="16" height="15" rx="1.5" fill="none" stroke="#bdbdbd"/><rect x="3" y="3" width="11" height="9" fill="#d8d8d8"/></svg>

<!-- DIALOG -->
<div class="a" style="left:646px;top:157px;width:363px;height:500px;background:#f0f0f0;border:1px solid #2a6cb0;box-shadow:inset 0 0 0 1px #f4fbff;"></div>
<div class="a" style="left:647px;top:158px;width:361px;height:31px;background:#0078d4;"></div>
<svg style="left:655px;top:164px;" width="16" height="14" viewBox="0 0 16 14"><rect x="1" y="0" width="2" height="2" fill="#9fd0f4"/><rect x="3.5" y="0" width="2" height="2" fill="#9fd0f4"/><rect x="1" y="2.5" width="2" height="2" fill="#9fd0f4"/><rect x="3.5" y="2.5" width="2" height="2" fill="#9fd0f4"/><path d="M2 5 H13 L15 8 H0 Z" fill="#f0f0f0"/><rect x="0" y="8" width="15" height="5" rx="1" fill="#3a3a3a" stroke="#cfcfcf" stroke-width="0.6"/><circle cx="3" cy="10.5" r="0.7" fill="#3ee06a"/></svg>
<div class="t nd" style="left:676px;top:168.14px;font-size:12px;color:#fff;transform:scaleX(0.96);transform-origin:0 0;">(C:) Local Disk Properties</div>
<svg style="left:988px;top:168px;" width="11" height="11" viewBox="0 0 11 11"><path d="M0.5 0.5 L10.5 10.5 M10.5 0.5 L0.5 10.5" stroke="#fff" stroke-width="1.2"/></svg>
<div class="a" style="left:655px;top:199px;width:103px;height:18px;background:#f0f0f0;border:1px solid #d9d9d9;border-bottom:none;"></div>
<div class="a" style="left:757px;top:199px;width:149px;height:18px;background:#f0f0f0;border:1px solid #d9d9d9;border-bottom:none;"></div>
<div class="a" style="left:905px;top:199px;width:93px;height:18px;background:#f0f0f0;border:1px solid #d9d9d9;border-bottom:none;"></div>
<div class="t nd" style="left:656.0px;top:201.84px;width:100px;text-align:center;font-size:12px;color:#1a1a1a;transform:scaleX(0.88);transform-origin:50% 0;">Security</div>
<div class="t nd" style="left:762.0px;top:201.84px;width:140px;text-align:center;font-size:12px;color:#1a1a1a;transform:scaleX(0.88);transform-origin:50% 0;">Previous Versions</div>
<div class="t nd" style="left:911.0px;top:201.84px;width:80px;text-align:center;font-size:12px;color:#1a1a1a;transform:scaleX(0.88);transform-origin:50% 0;">Quota</div>
<div class="a" style="left:742px;top:216px;width:78px;height:19px;background:#f0f0f0;border:1px solid #d9d9d9;border-bottom:none;"></div>
<div class="a" style="left:819px;top:216px;width:96px;height:19px;background:#f0f0f0;border:1px solid #d9d9d9;border-bottom:none;"></div>
<div class="a" style="left:914px;top:216px;width:84px;height:19px;background:#f0f0f0;border:1px solid #d9d9d9;border-bottom:none;"></div>
<div class="t nd" style="left:743.0px;top:219.84px;width:70px;text-align:center;font-size:12px;color:#1a1a1a;transform:scaleX(0.88);transform-origin:50% 0;">Tools</div>
<div class="t nd" style="left:822.0px;top:219.84px;width:90px;text-align:center;font-size:12px;color:#1a1a1a;transform:scaleX(0.88);transform-origin:50% 0;">Hardware</div>
<div class="t nd" style="left:916.0px;top:219.84px;width:80px;text-align:center;font-size:12px;color:#1a1a1a;transform:scaleX(0.88);transform-origin:50% 0;">Sharing</div>
<div class="a" style="left:653px;top:234px;width:347px;height:385px;background:#f9f9f9;border:1px solid #d9d9d9;"></div>
<div class="a" style="left:653px;top:214px;width:90px;height:22px;background:#f9f9f9;border:1px solid #d9d9d9;border-bottom:none;"></div>
<div class="t nd" style="left:657.0px;top:217.84px;width:80px;text-align:center;font-size:12px;color:#1a1a1a;transform:scaleX(0.88);transform-origin:50% 0;">General</div>
<svg style="left:668px;top:247px;" width="31" height="25" viewBox="0 0 31 25"><defs><linearGradient id="dlgd" x1="0" y1="0" x2="0" y2="1"><stop offset="0" stop-color="#5a5a5a"/><stop offset="1" stop-color="#262626"/></linearGradient></defs><path d="M6 9 H26 L30 16 H2 Z" fill="#e2e2e2"/><rect x="2" y="16" width="28" height="8.5" fill="url(#dlgd)"/><circle cx="7" cy="20" r="1" fill="#3ee06a"/><rect x="0.5" y="0.5" width="5" height="5" fill="#2b9be8"/><rect x="6.5" y="0.5" width="5" height="5" fill="#2b9be8"/><rect x="0.5" y="6.5" width="5" height="5" fill="#2b9be8"/><rect x="6.5" y="6.5" width="5" height="5" fill="#2b9be8"/></svg>
<div class="a" style="left:741px;top:254px;width:246px;height:23px;background:#fff;border:1px solid #e3e3e3;border-bottom:2px solid #0f5fb0;border-radius:3px 3px 0 0;"></div>
<div class="a" style="left:668px;top:288px;width:317px;height:1px;background:#a0a0a0;"></div>
<div class="a" style="left:668px;top:340px;width:317px;height:1px;background:#a0a0a0;"></div>
<div class="a" style="left:668px;top:394px;width:317px;height:1px;background:#a0a0a0;"></div>
<div class="a" style="left:668px;top:514px;width:317px;height:1px;background:#a0a0a0;"></div>
<div class="t nd" style="left:669px;top:298.94px;font-size:12px;color:#1a1a1a;transform:scaleX(0.88);transform-origin:0 0;">Type:</div>
<div class="t nd" style="left:741px;top:298.94px;font-size:12px;color:#1a1a1a;transform:scaleX(0.88);transform-origin:0 0;">Local Disk</div>
<div class="t nd" style="left:669px;top:319.64px;font-size:12px;color:#1a1a1a;transform:scaleX(0.88);transform-origin:0 0;">File system:</div>
<div class="t nd" style="left:741px;top:319.64px;font-size:12px;color:#1a1a1a;transform:scaleX(0.88);transform-origin:0 0;">NTFS</div>
<div class="a" style="left:668px;top:348px;width:15px;height:15px;background:#26a0da;"></div>
<div class="a" style="left:668px;top:369px;width:15px;height:15px;background:#adadad;"></div>
<div class="t nd" style="left:689px;top:348.94px;font-size:12px;color:#1a1a1a;transform:scaleX(0.88);transform-origin:0 0;">Used space:</div>
<div class="t nd" style="left:689px;top:369.74px;font-size:12px;color:#1a1a1a;transform:scaleX(0.88);transform-origin:0 0;">Free space:</div>
<div class="t nd" style="left:689px;top:404.24px;font-size:12px;color:#1a1a1a;transform:scaleX(0.88);transform-origin:0 0;">Capacity:</div>
<div class="t nd" style="left:814px;top:348.94px;font-size:12px;color:#1a1a1a;transform:scaleX(0.88);transform-origin:0 0;">19,181,518,848 bytes</div>
<div class="t nd" style="left:814px;top:369.74px;font-size:12px;color:#1a1a1a;transform:scaleX(0.88);transform-origin:0 0;">34,451,042,304 bytes</div>
<div class="t nd" style="left:814px;top:404.24px;font-size:12px;color:#1a1a1a;transform:scaleX(0.88);transform-origin:0 0;">53,632,561,152 bytes</div>
<div class="t nd" style="left:941px;top:348.94px;font-size:12px;color:#1a1a1a;transform:scaleX(0.88);transform-origin:0 0;">17.8 GB</div>
<div class="t nd" style="left:941px;top:369.74px;font-size:12px;color:#1a1a1a;transform:scaleX(0.88);transform-origin:0 0;">32.0 GB</div>
<div class="t nd" style="left:941px;top:404.24px;font-size:12px;color:#1a1a1a;transform:scaleX(0.88);transform-origin:0 0;">49.9 GB</div>
<svg style="left:786px;top:413px;left:786.8px;top:413.7px;" width="80" height="80" viewBox="0 0 80 80"><circle cx="40" cy="40" r="22.7" fill="none" stroke="#adadad" stroke-width="11.0"/><path d="M17.30 40.00 A22.7 22.7 0 0 1 53.85 22.02" fill="none" stroke="#26a0da" stroke-width="11.0"/><circle cx="40" cy="40" r="17.2" fill="#fff"/></svg>
<div class="t nd" style="left:810px;top:496.84px;font-size:12px;color:#1a1a1a;transform:scaleX(0.88);transform-origin:0 0;">Drive C:</div>
<div class="a" style="left:907px;top:487px;width:79px;height:21px;background:#fdfdfd;border:1px solid #d0d0d0;border-radius:4px;"></div>
<div class="t nd" style="left:901.5px;top:491.34px;width:90px;text-align:center;font-size:12px;color:#1a1a1a;transform:scaleX(0.88);transform-origin:50% 0;">Disk Cleanup</div>
<div class="a" style="left:668px;top:548px;width:13px;height:13px;background:#f3f3f3;border:1px solid #8a8a8a;border-radius:2px;"></div>
<div class="t nd" style="left:684px;top:547.84px;font-size:12px;color:#1a1a1a;transform:scaleX(0.88);transform-origin:0 0;">Compress this drive to save disk space</div>
<div class="a" style="left:668px;top:571px;width:13px;height:13px;background:#0067c0;border-radius:2px;"></div>
<svg style="left:668px;top:571px;" width="13" height="13" viewBox="0 0 13 13"><path d="M3 6.8 L5.4 9.2 L10.2 4.2" stroke="#fff" stroke-width="1.3" fill="none"/></svg>
<div class="t nd" style="left:684px;top:570.04px;font-size:12px;color:#1a1a1a;transform:scaleX(0.88);transform-origin:0 0;">Allow files on this drive to have contents indexed in addition to</div>
<div class="t nd" style="left:684px;top:583.04px;font-size:12px;color:#1a1a1a;transform:scaleX(0.88);transform-origin:0 0;">file properties</div>
<div class="a" style="left:766px;top:627px;width:73px;height:21px;background:#fdfdfd;border:1px solid #0067c0;border-radius:4px;box-shadow:inset 0 0 0 0.6px #0067c0;"></div>
<div class="t nd" style="left:772.5px;top:631.84px;width:60px;text-align:center;font-size:12px;color:#1a1a1a;transform:scaleX(0.88);transform-origin:50% 0;">OK</div>
<div class="a" style="left:847px;top:627px;width:73px;height:21px;background:#fdfdfd;border:1px solid #d0d0d0;border-bottom-color:#b8b8b8;border-radius:4px;"></div>
<div class="t nd" style="left:853.5px;top:631.84px;width:60px;text-align:center;font-size:12px;color:#1a1a1a;transform:scaleX(0.88);transform-origin:50% 0;">Cancel</div>
<div class="a" style="left:928px;top:627px;width:72px;height:21px;background:#f5f5f5;border:1px solid #e0e0e0;border-radius:4px;"></div>
<div class="t nd" style="left:934.0px;top:631.84px;width:60px;text-align:center;font-size:12px;color:#a0a0a0;transform:scaleX(0.88);transform-origin:50% 0;">Apply</div>

<!-- TASKBAR -->
<div id="task" class="a"></div>
<svg style="left:11px;top:737px;" width="24" height="22" viewBox="0 0 24 22"><rect x="0.5" y="0.5" width="23" height="21" rx="2" fill="#1b5fae"/><rect x="2" y="2" width="9" height="18" fill="#f4f4f4"/><rect x="13" y="2" width="9" height="9" fill="#62eef8"/><rect x="13" y="11" width="9" height="4" fill="#2cc0c8"/><rect x="13" y="15" width="9" height="5" fill="#1892a8"/></svg>
<svg style="left:351px;top:736px;" width="22" height="23" viewBox="0 0 22 23"><defs><linearGradient id="stg" x1="0" y1="0" x2="1" y2="1"><stop offset="0" stop-color="#7cd0f8"/><stop offset="1" stop-color="#1a6ed6"/></linearGradient></defs><rect x="0" y="0" width="10.5" height="10.8" rx="1" fill="url(#stg)"/><rect x="11.5" y="0" width="10.5" height="10.8" rx="1" fill="url(#stg)"/><rect x="0" y="11.8" width="10.5" height="10.8" rx="1" fill="url(#stg)"/><rect x="11.5" y="11.8" width="10.5" height="10.8" rx="1" fill="url(#stg)"/></svg>
<svg style="left:398px;top:735px;" width="26" height="25" viewBox="0 0 26 25"><circle cx="15" cy="10.5" r="8.3" fill="#4a4a4a" stroke="#f2f2f2" stroke-width="2.6"/><path d="M9 16.5 L2 23.5" stroke="#f2f2f2" stroke-width="2.8" stroke-linecap="round"/></svg>
<svg style="left:446px;top:737px;" width="25" height="22" viewBox="0 0 25 22"><rect x="0" y="6" width="18" height="16" rx="1.5" fill="#6e6e6e"/><defs><linearGradient id="tvg" x1="0" y1="0" x2="1" y2="1"><stop offset="0" stop-color="#fafafa"/><stop offset="1" stop-color="#c8c8c8"/></linearGradient></defs><rect x="6" y="0" width="18.5" height="16" rx="1.5" fill="url(#tvg)"/><rect x="6" y="6" width="12" height="10" fill="#9a9a9a"/></svg>
<svg style="left:493px;top:735px;" width="27" height="26" viewBox="0 0 27 26"><defs><linearGradient id="chg" x1="0" y1="0" x2="1" y2="1"><stop offset="0" stop-color="#5b6be0"/><stop offset="1" stop-color="#b06ae8"/></linearGradient></defs><path d="M13.5 1 A12 12 0 1 1 6 22 L2 25 L3.5 19 A12 12 0 0 1 13.5 1 Z" fill="url(#chg)"/><rect x="6.5" y="8.5" width="10" height="9" rx="2" fill="#fff"/><path d="M17.5 11.5 L21 9 V17 L17.5 14.5 Z" fill="#fff"/></svg>
<div class="a" style="left:533px;top:728px;width:48px;height:40px;background:#393939;border-radius:4px;"></div>
<div class="a" style="left:537px;top:766px;width:40px;height:2px;background:#60cdff;border-radius:1px;"></div>
<svg style="left:544px;top:737px;" width="26" height="23" viewBox="0 0 26 23"><defs><linearGradient id="tfo" x1="0" y1="0" x2="0" y2="1"><stop offset="0" stop-color="#ffd866"/><stop offset="1" stop-color="#f5b82a"/></linearGradient></defs><path d="M0 2 Q0 0 2 0 H8 L10 2 H24 Q26 2 26 4 V21 H0 Z" fill="#e5a514"/><rect x="0" y="4" width="26" height="17" rx="1" fill="url(#tfo)"/><rect x="6" y="13" width="14" height="9.5" rx="2" fill="#1b6cc4"/><rect x="6" y="13" width="14" height="3" rx="1.5" fill="#2f90e4"/><rect x="9.5" y="17" width="7" height="1.4" fill="#0c3c7a"/></svg>
<svg style="left:593px;top:735px;" width="26" height="26" viewBox="0 0 49 49"><defs><linearGradient id="eaT" x1="0" y1="0.3" x2="1" y2="0.7"><stop offset="0" stop-color="#2fa8ec"/><stop offset="0.45" stop-color="#2ec4c8"/><stop offset="1" stop-color="#5fe05a"/></linearGradient><linearGradient id="ebT" x1="0" y1="0" x2="0.6" y2="1"><stop offset="0" stop-color="#1a86dc"/><stop offset="1" stop-color="#0f5cb0"/></linearGradient></defs><path d="M1 27 C1 12 11 1.5 24.5 1.5 C38 1.5 48 11 48 22 C48 30 42 35 35 35 C29 35 25 31.5 25 27.5 C25 25.5 26 24 27.5 23 C25 18 20 15.5 15 16 C8 16.5 3 21 1 27 Z" fill="url(#eaT)"/><path d="M1 27 C3 20 9 15 16 15.5 C22 16 27 19 28.5 23.5 C22 22.5 17.5 27 18 33 C18.5 40 26 45 34 44.5 C40 44 44 41 46 38 C43 45 35 49 27 49 C12 49 1 39 1 27 Z" fill="url(#ebT)"/><path d="M18 33 C17.5 27 22 22.5 28.5 23.5 C21 23 14.5 27 15 33 C15.5 40 24 45 34 44.5 C26 45 18.5 40 18 33 Z" fill="#0c4a9a" opacity="0.55"/></svg>
<svg style="left:642px;top:735px;" width="25" height="26" viewBox="0 0 25 26"><path d="M7 6 V3 Q7 1 9 1 H16 Q18 1 18 3 V6" stroke="#e8e8e8" stroke-width="2" fill="none"/><rect x="0.5" y="6" width="24" height="19" rx="1.5" fill="#f4f4f4"/><rect x="0.5" y="6" width="24" height="3" fill="#e2e2e2"/><rect x="7.5" y="11" width="4.5" height="4.5" fill="#f25022"/><rect x="13" y="11" width="4.5" height="4.5" fill="#7fba00"/><rect x="7.5" y="16.5" width="4.5" height="4.5" fill="#00a4ef"/><rect x="13" y="16.5" width="4.5" height="4.5" fill="#ffb900"/></svg>
<svg style="left:816px;top:744px;" width="12" height="7" viewBox="0 0 12 7"><path d="M1 6 L6 1 L11 6" stroke="#e8e8e8" stroke-width="1.3" fill="none"/></svg>
<svg style="left:837px;top:740px;" width="18" height="16" viewBox="0 0 18 16"><rect x="0.6" y="2.6" width="12" height="9" fill="none" stroke="#e8e8e8" stroke-width="1.2"/><path d="M6.5 11.6 V14.5 M3 15 H10" stroke="#e8e8e8" stroke-width="1.2"/><rect x="12.6" y="0.6" width="4" height="6" rx="1" fill="#202020" stroke="#e8e8e8" stroke-width="1.2"/><path d="M14.6 6.6 V15.5" stroke="#e8e8e8" stroke-width="1.2"/></svg>
<svg style="left:861px;top:740px;" width="18" height="16" viewBox="0 0 18 16"><path d="M1 5.5 H4 L8.5 1.5 V14.5 L4 10.5 H1 Z" fill="none" stroke="#e8e8e8" stroke-width="1.2"/><path d="M11 5.5 Q12.5 8 11 10.5 M13.5 3.5 Q16 8 13.5 12.5 M15.8 1.5 Q19 8 15.8 14.5" stroke="#e8e8e8" stroke-width="1.2" fill="none"/></svg>
<div class="t" style="left:888px;top:733.64px;font-size:12px;color:#f2f2f2;transform:scaleX(0.86);transform-origin:0 0;">ENG</div>
<div class="t" style="left:888px;top:751.04px;font-size:12px;color:#f2f2f2;transform:scaleX(0.86);transform-origin:0 0;">INTL</div>
<div class="t" style="left:910.0px;top:733.64px;width:80px;text-align:center;font-size:12px;color:#f2f2f2;transform:scaleX(0.93);transform-origin:50% 0;">3:29 PM</div>
<div class="t" style="left:910.3px;top:751.04px;width:80px;text-align:center;font-size:12px;color:#f2f2f2;transform:scaleX(0.94);transform-origin:50% 0;">10/18/2022</div>
<svg style="left:992px;top:741px;" width="17" height="16" viewBox="0 0 17 16"><path d="M2 0.5 H14 Q15.5 0.5 15.5 2 V9 Q15.5 10.5 14 10.5 H6 L3.5 13 V10.5 H2 Q0.5 10.5 0.5 9 V2 Q0.5 0.5 2 0.5 Z" fill="#fff"/><rect x="3" y="4" width="9" height="1.2" fill="#202020"/><rect x="3" y="7" width="7" height="1.2" fill="#202020"/><circle cx="12" cy="11.5" r="4.5" fill="#fff" stroke="#202020" stroke-width="1"/></svg>
</body></html>
